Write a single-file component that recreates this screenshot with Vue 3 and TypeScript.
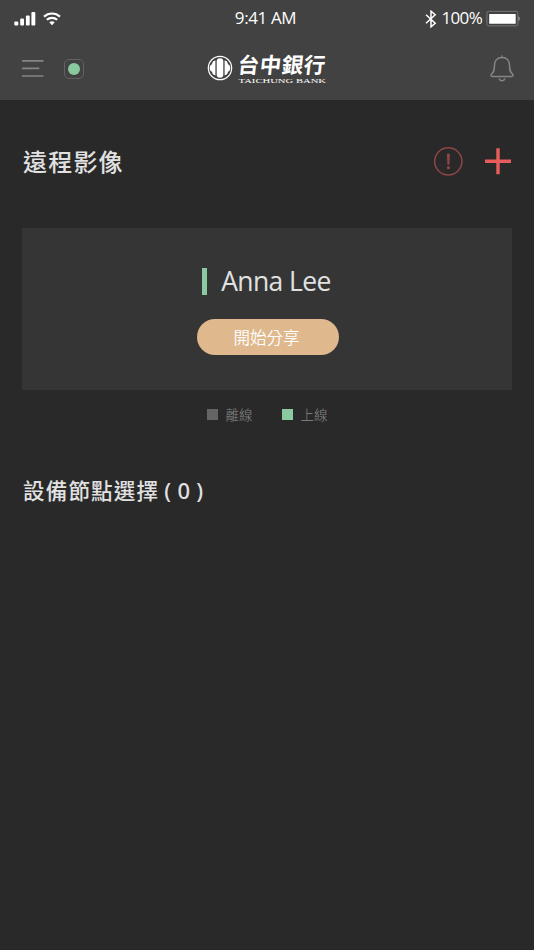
<script setup lang="ts">
import { ref } from 'vue'

interface LegendItem {
  label: string
  state: 'offline' | 'online'
}

const userName = ref('Anna Lee')
const nodeCount = ref(0)
const legend: LegendItem[] = [
  { label: '離線', state: 'offline' },
  { label: '上線', state: 'online' },
]
</script>

<template>
  <div class="screen">
    <header class="header">
      <div class="status-bar">
        <div class="side">
          <svg class="signal" width="22" height="14" viewBox="0 0 22 14" fill="#fff">
            <rect x="0.3" y="9.5" width="4" height="4" rx="1" />
            <rect x="6.2" y="6.5" width="3.8" height="7" rx="1" />
            <rect x="11.9" y="3.5" width="3.8" height="10" rx="1" />
            <rect x="17.4" y="0" width="3.9" height="13.5" rx="1" />
          </svg>
          <svg class="wifi" width="18" height="14" viewBox="0 0 18 14" fill="none" stroke="#fff" stroke-width="2.1">
            <path d="M1 4.6C5.5 .5 12.5 .5 17 4.6" />
            <path d="M3.8 7.8C6.8 5.2 11.2 5.2 14.2 7.8" />
            <path d="M9 13.2 6.3 10.3C7.8 8.9 10.2 8.9 11.7 10.3Z" fill="#fff" stroke="none" />
          </svg>
        </div>
        <span class="clock">9:41 AM</span>
        <div class="side right">
          <svg width="12" height="18" viewBox="0 0 12 18" fill="none" stroke="#fff" stroke-width="1.5">
            <path d="M1 4.8 10.2 13.2 6 16.8V1.2L10.2 4.8 1 13.2" />
          </svg>
          <span class="percent">100%</span>
          <svg class="battery" width="34" height="17" viewBox="0 0 34 17">
            <rect x="0.9" y="1.3" width="31" height="14.6" rx="1.6" fill="none" stroke="#777" stroke-width="1" />
            <rect x="3.2" y="3.9" width="26.5" height="9.8" rx=".5" fill="#fff" />
            <path d="M32.3 6.2C34.3 7 34.3 10 32.3 11Z" fill="#999" />
          </svg>
        </div>
      </div>
      <nav class="nav">
        <div class="side">
          <svg class="menu" width="22" height="19" viewBox="0 0 22 19" stroke="#858585" stroke-width="1.7">
            <path d="M0 1.8H21.5M0 9.4H17.3M0 17H21.5" />
          </svg>
          <span class="presence"><i></i></span>
        </div>
        <div class="brand">
          <svg class="emblem" width="26" height="26" viewBox="0 0 26 26">
            <circle cx="13" cy="13" r="11.7" fill="none" stroke="#fff" stroke-width="1.2" />
            <rect x="9.7" y="3.2" width="6.6" height="19.6" rx="3.3" fill="#fff" />
            <path d="M8.4 5.6V20.4C5.4 20 5.2 17.8 5.1 16.8 1.8 16 1.8 10 5.1 9.2 5.2 8.2 5.4 6 8.4 5.6Z" fill="#fff" />
            <path d="M17.6 5.6V20.4C20.6 20 20.8 17.8 20.9 16.8 24.2 16 24.2 10 20.9 9.2 20.8 8.2 20.6 6 17.6 5.6Z" fill="#fff" />
          </svg>
          <div class="brand-text">
            <span class="brand-zh">台中銀行</span>
            <span class="brand-en">TAICHUNG BANK</span>
          </div>
        </div>
        <svg class="bell" width="24" height="28" viewBox="0 0 24 28" fill="none" stroke="#858585" stroke-width="1.5" stroke-linejoin="round" stroke-linecap="round">
          <path d="M12 1V2.6M12 2.6C7 2.6 4.6 6 4.5 10C4.4 14.4 4.3 16.5 1.7 18.8C.5 20 .9 21.5 2.2 21.5H21.8C23.1 21.5 23.5 20 22.3 18.8C19.7 16.5 19.6 14.4 19.5 10C19.4 6 17 2.6 12 2.6Z" />
          <path d="M9.3 24C10.3 26.4 13.7 26.4 14.7 24" />
        </svg>
      </nav>
    </header>

    <main>
      <div class="title-row">
        <h1>遠程影像</h1>
        <div class="actions">
          <svg width="30" height="30" viewBox="0 0 30 30">
            <circle cx="15.3" cy="15.3" r="13.6" fill="none" stroke="#8f4545" stroke-width="1.5" />
            <path d="M13.9 7.8H16.9L16.4 18.8H14.4Z" fill="#914545" />
            <circle cx="15.4" cy="21.7" r="1.6" fill="#914545" />
          </svg>
          <svg class="plus" width="27" height="27" viewBox="0 0 27 27" stroke="#e85d5c" stroke-width="3.4">
            <path d="M0 13.2H26M13 .2V26.2" />
          </svg>
        </div>
      </div>

      <section class="card">
        <div class="name-row"><i class="bar"></i><span class="name">{{ userName }}</span></div>
        <button class="share" type="button">開始分享</button>
      </section>

      <div class="legend">
        <div v-for="item in legend" :key="item.state" class="legend-item">
          <i :class="item.state"></i><span>{{ item.label }}</span>
        </div>
      </div>

      <h2>設備節點選擇<span class="count">( {{ nodeCount }} )</span></h2>
    </main>
  </div>
</template>

<style>
body {
  margin: 0;
  background: #292929;
}
</style>

<style scoped>
.screen {
  width: 534px;
  height: 950px;
  overflow: hidden;
  background: #292929;
  color: #e1e1e1;
  font-family: "Open Sans", "Noto Sans CJK TC", sans-serif;
}
svg { display: block; flex: none; }
.header {
  height: 100px;
  background: #424242;
}
.status-bar {
  display: grid;
  grid-template-columns: 1fr auto 1fr;
  align-items: center;
  height: 37px;
  padding: 0 14px;
  color: #fff;
  font-size: 17px;
  line-height: 36px;
}
.side { display: flex; align-items: center; }
.wifi { margin-left: 7px; }
.clock {
  height: 37px;
  padding-right: 3px;
  letter-spacing: -0.4px;
}
.right { justify-content: flex-end; }
.percent {
  height: 37px;
  margin-left: 5px;
  letter-spacing: -0.7px;
}
.battery { margin-left: 4px; }
.nav {
  display: grid;
  grid-template-columns: 1fr auto 1fr;
  align-items: center;
  height: 63px;
  padding: 0 20px 0 22px;
}
.presence {
  display: flex;
  align-items: center;
  justify-content: center;
  box-sizing: border-box;
  width: 20px;
  height: 20px;
  margin-left: 20px;
  border: 1px solid #626262;
  border-radius: 5px;
}
.presence i {
  width: 12px;
  height: 12px;
  border-radius: 50%;
  background: #8acaa0;
}
.brand {
  display: flex;
  align-items: center;
  gap: 4px;
  padding-right: 3px;
  color: #fff;
}
.emblem { margin-bottom: 2px; }
.brand-text {
  display: flex;
  flex-direction: column;
  width: 89px;
}
.brand-zh {
  padding-left: 1px;
  font: 700 21.5px/22px "Noto Sans CJK TC", sans-serif;
  letter-spacing: 0.5px;
  transform: skewX(-6deg);
  white-space: nowrap;
}
.brand-en {
  padding: 2px 0 0 1px;
  font: 7px/8px "Liberation Serif", serif;
  transform: scaleX(1.52);
  transform-origin: left;
  white-space: nowrap;
}
.bell { justify-self: end; }
main { padding: 0 22px; }
.title-row {
  display: flex;
  align-items: center;
  justify-content: space-between;
  height: 122px;
}
h1, h2 { margin: 0; font-family: "Noto Sans CJK TC", sans-serif; font-weight: 500; }
h1 {
  padding: 0 0 1px 1px;
  font-size: 24px;
  line-height: 34px;
  letter-spacing: 1.2px;
}
.actions { display: flex; align-items: center; gap: 22px; }
.card {
  display: flex;
  flex-direction: column;
  align-items: center;
  box-sizing: border-box;
  height: 162px;
  margin-top: 6px;
  padding-top: 39px;
  background: #353535;
}
.name-row {
  display: flex;
  align-items: center;
  height: 29px;
  padding-right: 1px;
  font-size: 26.5px;
  letter-spacing: -0.6px;
  white-space: nowrap;
}
.name { padding-bottom: 2px; }
.bar {
  width: 5px;
  height: 27px;
  margin-right: 14px;
  background: #8acaa0;
}
.share {
  width: 142px;
  height: 36px;
  margin: 23px 0 0 1px;
  padding: 0 2px 0 0;
  border: 0;
  border-radius: 18px;
  background: #dfb88d;
  color: #fff;
  font: 350 16.5px/36px "Noto Sans CJK TC", sans-serif;
}
.legend {
  display: flex;
  justify-content: center;
  gap: 29px;
  height: 49px;
  color: #888;
  font: 300 13.5px/49px "Noto Sans CJK TC", sans-serif;
}
.legend-item { display: flex; align-items: center; gap: 8px; }
.legend-item i { width: 11px; height: 11px; }
.offline { background: #656565; }
.online { background: #8acaa0; }
h2 {
  display: flex;
  margin-top: 33px;
  padding-left: 1px;
  font-size: 21.5px;
  line-height: 36px;
  letter-spacing: 1.2px;
}
.count {
  margin-left: 5px;
  font-family: "Noto Sans", sans-serif;
  font-size: 22px;
  font-weight: 500;
  letter-spacing: 0.3px;
  white-space: pre;
}
</style>
